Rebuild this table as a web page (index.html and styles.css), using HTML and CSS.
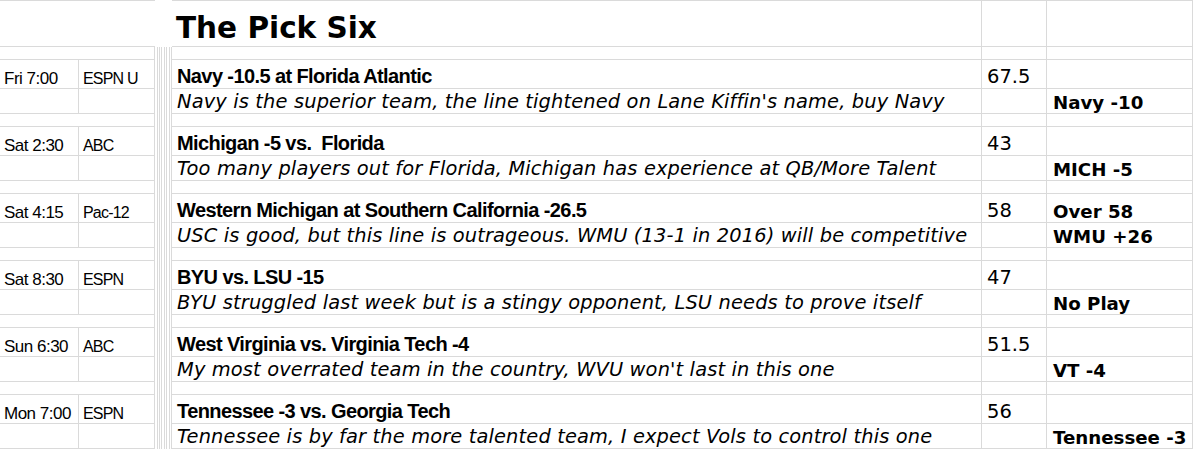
FILE: index.html
```html
<!DOCTYPE html>
<html lang="en">
<head>
<meta charset="utf-8">
<title>The Pick Six</title>
<link rel="stylesheet" href="styles.css">
</head>
<body>
<div class="sheet">
  <div class="row header">
    <div class="c lead merged"></div>
    <div class="c narrowgap"></div>
    <div class="c title">The Pick Six</div>
    <div class="c total"></div>
    <div class="c pick"></div>
  </div>
  <div class="row spacer">
    <div class="c merged"></div>
    <div class="c n"></div><div class="c n"></div><div class="c n"></div><div class="c n"></div><div class="c n"></div><div class="c n"></div><div class="c n"></div>
    <div class="c game"></div><div class="c total"></div><div class="c pick"></div>
  </div>

  <div class="row main">
    <div class="c time">Fri 7:00</div><div class="c net">ESPN U</div>
    <div class="c n"></div><div class="c n"></div><div class="c n"></div><div class="c n"></div><div class="c n"></div><div class="c n"></div><div class="c n"></div>
    <div class="c game">Navy -10.5 at Florida Atlantic</div><div class="c total">67.5</div><div class="c pick"></div>
  </div>
  <div class="row note">
    <div class="c time"></div><div class="c net"></div>
    <div class="c n"></div><div class="c n"></div><div class="c n"></div><div class="c n"></div><div class="c n"></div><div class="c n"></div><div class="c n"></div>
    <div class="c game">Navy is the superior team, the line tightened on Lane Kiffin's name, buy Navy</div><div class="c total"></div><div class="c pick">Navy -10</div>
  </div>
  <div class="row spacer">
    <div class="c merged"></div>
    <div class="c n"></div><div class="c n"></div><div class="c n"></div><div class="c n"></div><div class="c n"></div><div class="c n"></div><div class="c n"></div>
    <div class="c game"></div><div class="c total"></div><div class="c pick"></div>
  </div>

  <div class="row main">
    <div class="c time">Sat 2:30</div><div class="c net">ABC</div>
    <div class="c n"></div><div class="c n"></div><div class="c n"></div><div class="c n"></div><div class="c n"></div><div class="c n"></div><div class="c n"></div>
    <div class="c game">Michigan -5 vs.&nbsp; Florida</div><div class="c total">43</div><div class="c pick"></div>
  </div>
  <div class="row note">
    <div class="c time"></div><div class="c net"></div>
    <div class="c n"></div><div class="c n"></div><div class="c n"></div><div class="c n"></div><div class="c n"></div><div class="c n"></div><div class="c n"></div>
    <div class="c game">Too many players out for Florida, Michigan has experience at QB/More Talent</div><div class="c total"></div><div class="c pick">MICH -5</div>
  </div>
  <div class="row spacer">
    <div class="c merged"></div>
    <div class="c n"></div><div class="c n"></div><div class="c n"></div><div class="c n"></div><div class="c n"></div><div class="c n"></div><div class="c n"></div>
    <div class="c game"></div><div class="c total"></div><div class="c pick"></div>
  </div>

  <div class="row main">
    <div class="c time">Sat 4:15</div><div class="c net">Pac-12</div>
    <div class="c n"></div><div class="c n"></div><div class="c n"></div><div class="c n"></div><div class="c n"></div><div class="c n"></div><div class="c n"></div>
    <div class="c game">Western Michigan at Southern California -26.5</div><div class="c total">58</div><div class="c pick">Over 58</div>
  </div>
  <div class="row note">
    <div class="c time"></div><div class="c net"></div>
    <div class="c n"></div><div class="c n"></div><div class="c n"></div><div class="c n"></div><div class="c n"></div><div class="c n"></div><div class="c n"></div>
    <div class="c game">USC is good, but this line is outrageous. WMU (13-1 in 2016) will be competitive</div><div class="c total"></div><div class="c pick">WMU +26</div>
  </div>
  <div class="row spacer">
    <div class="c merged"></div>
    <div class="c n"></div><div class="c n"></div><div class="c n"></div><div class="c n"></div><div class="c n"></div><div class="c n"></div><div class="c n"></div>
    <div class="c game"></div><div class="c total"></div><div class="c pick"></div>
  </div>

  <div class="row main">
    <div class="c time">Sat 8:30</div><div class="c net">ESPN</div>
    <div class="c n"></div><div class="c n"></div><div class="c n"></div><div class="c n"></div><div class="c n"></div><div class="c n"></div><div class="c n"></div>
    <div class="c game">BYU vs. LSU -15</div><div class="c total">47</div><div class="c pick"></div>
  </div>
  <div class="row note">
    <div class="c time"></div><div class="c net"></div>
    <div class="c n"></div><div class="c n"></div><div class="c n"></div><div class="c n"></div><div class="c n"></div><div class="c n"></div><div class="c n"></div>
    <div class="c game">BYU struggled last week but is a stingy opponent, LSU needs to prove itself</div><div class="c total"></div><div class="c pick">No Play</div>
  </div>
  <div class="row spacer">
    <div class="c merged"></div>
    <div class="c n"></div><div class="c n"></div><div class="c n"></div><div class="c n"></div><div class="c n"></div><div class="c n"></div><div class="c n"></div>
    <div class="c game"></div><div class="c total"></div><div class="c pick"></div>
  </div>

  <div class="row main">
    <div class="c time">Sun 6:30</div><div class="c net">ABC</div>
    <div class="c n"></div><div class="c n"></div><div class="c n"></div><div class="c n"></div><div class="c n"></div><div class="c n"></div><div class="c n"></div>
    <div class="c game">West Virginia vs. Virginia Tech -4</div><div class="c total">51.5</div><div class="c pick"></div>
  </div>
  <div class="row note">
    <div class="c time"></div><div class="c net"></div>
    <div class="c n"></div><div class="c n"></div><div class="c n"></div><div class="c n"></div><div class="c n"></div><div class="c n"></div><div class="c n"></div>
    <div class="c game">My most overrated team in the country, WVU won't last in this one</div><div class="c total"></div><div class="c pick">VT -4</div>
  </div>
  <div class="row spacer">
    <div class="c merged"></div>
    <div class="c n"></div><div class="c n"></div><div class="c n"></div><div class="c n"></div><div class="c n"></div><div class="c n"></div><div class="c n"></div>
    <div class="c game"></div><div class="c total"></div><div class="c pick"></div>
  </div>

  <div class="row main">
    <div class="c time">Mon 7:00</div><div class="c net">ESPN</div>
    <div class="c n"></div><div class="c n"></div><div class="c n"></div><div class="c n"></div><div class="c n"></div><div class="c n"></div><div class="c n"></div>
    <div class="c game">Tennessee -3 vs. Georgia Tech</div><div class="c total">56</div><div class="c pick"></div>
  </div>
  <div class="row note">
    <div class="c time"></div><div class="c net"></div>
    <div class="c n"></div><div class="c n"></div><div class="c n"></div><div class="c n"></div><div class="c n"></div><div class="c n"></div><div class="c n"></div>
    <div class="c game">Tennessee is by far the more talented team, I expect Vols to control this one</div><div class="c total"></div><div class="c pick">Tennessee -3</div>
  </div>
</div>
</body>
</html>
```

FILE: styles.css
```css
html, body {
  margin: 0;
  padding: 0;
  background: #ffffff;
  color: #000000;
}

body {
  width: 1193px;
  height: 452px;
  overflow: hidden;
  font-family: "Liberation Sans", Arial, sans-serif;
}

.sheet {
  display: flex;
  flex-direction: column;
}

.row {
  display: grid;
  grid-template-columns: 79px 76px 3px 2px 2px 3px 2px 3px 2px 810px 65px 146px;
}

.c {
  box-sizing: border-box;
  display: flex;
  align-items: flex-end;
  white-space: nowrap;
  border-right: 1px solid #dadada;
  border-bottom: 1px solid #dadada;
  padding: 0 4px 2px 5px;
  line-height: 1;
  min-width: 0;
}

.c.n {
  border-bottom: none;
  padding: 0;
}

/* header */
.header {
  height: 47px;
}

.header .c {
  border-top: 1px solid #dadada;
}

.header .merged {
  grid-column: span 2;
  border-right: none;
}

.header .narrowgap {
  grid-column: span 7;
  border: none;
}

.header .title {
  font-family: "DejaVu Sans", Verdana, sans-serif;
  font-weight: bold;
  font-size: 29.5px;
  padding: 0 0 3px 4px;
}

.spacer {
  height: 13px;
}

.spacer .merged {
  grid-column: span 2;
}

.main {
  height: 29px;
}

.note {
  height: 25px;
}

.time {
  font-size: 17px;
  letter-spacing: -0.5px;
  padding: 0 0 1px 4px;
}

.net {
  font-size: 16px;
  letter-spacing: -0.8px;
  padding: 0 0 1px 4px;
}

.main .game {
  font-weight: bold;
  font-size: 20px;
  letter-spacing: -0.6px;
  padding: 0 0 2px 5px;
}

.note .game {
  font-family: "DejaVu Sans", Verdana, sans-serif;
  font-style: italic;
  font-size: 19.4px;
  letter-spacing: 0.15px;
  padding: 0 0 2px 5px;
}

.total {
  font-family: "DejaVu Sans", Verdana, sans-serif;
  font-size: 19.5px;
  padding: 0 0 2px 5px;
}

.pick {
  font-family: "DejaVu Sans", Verdana, sans-serif;
  font-weight: bold;
  font-size: 18.2px;
  padding: 0 0 1px 6px;
}
```
